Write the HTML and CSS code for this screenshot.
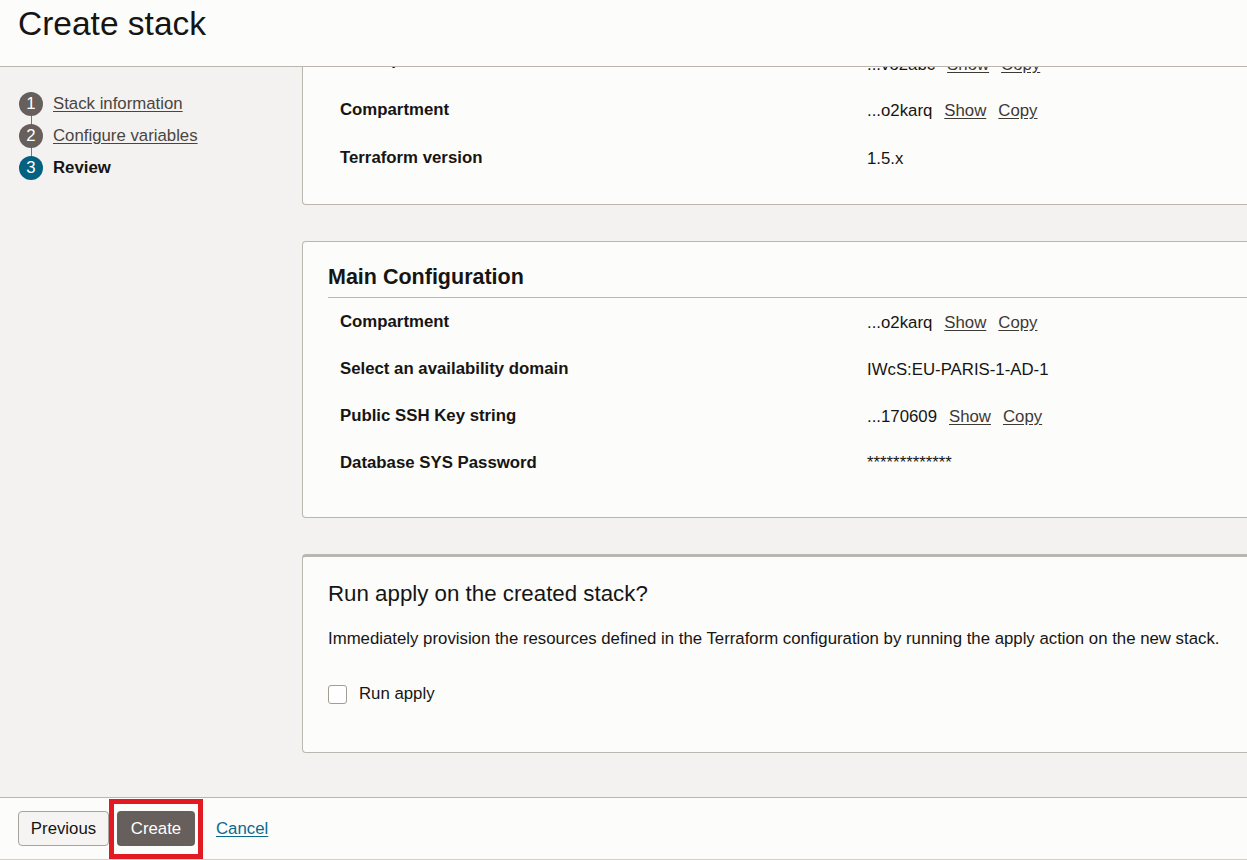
FILE: index.html
```html
<!DOCTYPE html>
<html lang="en">
<head>
<meta charset="utf-8">
<title>Create stack</title>
<link rel="stylesheet" href="styles.css">
</head>
<body>
<header class="page-header">
  <h1 class="title">Create stack</h1>
</header>
<div class="main">
  <nav class="sidebar">
    <ol class="steps">
      <li class="step done"><span class="num">1</span><a href="#" class="step-link">Stack information</a></li>
      <li class="step done"><span class="num">2</span><a href="#" class="step-link">Configure variables</a></li>
      <li class="step active"><span class="num">3</span><span class="step-current">Review</span></li>
    </ol>
  </nav>
  <section class="content">
    <div class="card card-first">
      <div class="rows rows-tall">
        <div class="row row-hidden"><div class="label">Description</div><div class="value">...vo2abc<a href="#" class="act">Show</a><a href="#" class="act">Copy</a></div></div>
        <div class="row"><div class="label">Compartment</div><div class="value">...o2karq<a href="#" class="act">Show</a><a href="#" class="act">Copy</a></div></div>
        <div class="row"><div class="label">Terraform version</div><div class="value">1.5.x</div></div>
      </div>
    </div>
    <div class="card card-config">
      <h2 class="card-title">Main Configuration</h2>
      <div class="rows">
        <div class="row"><div class="label">Compartment</div><div class="value">...o2karq<a href="#" class="act">Show</a><a href="#" class="act">Copy</a></div></div>
        <div class="row"><div class="label">Select an availability domain</div><div class="value">IWcS:EU-PARIS-1-AD-1</div></div>
        <div class="row"><div class="label">Public SSH Key string</div><div class="value">...170609<a href="#" class="act">Show</a><a href="#" class="act">Copy</a></div></div>
        <div class="row"><div class="label">Database SYS Password</div><div class="value pw">*************</div></div>
      </div>
    </div>
    <div class="card card-apply">
      <h2 class="apply-title">Run apply on the created stack?</h2>
      <p class="apply-text">Immediately provision the resources defined in the Terraform configuration by running the apply action on the new stack.</p>
      <label class="check"><span class="box"></span><span>Run apply</span></label>
    </div>
  </section>
</div>
<footer class="footer">
  <button class="btn btn-secondary">Previous</button>
  <span class="highlight-wrap"><button class="btn btn-primary">Create</button><span class="highlight"></span></span>
  <a href="#" class="cancel">Cancel</a>
</footer>
</body>
</html>
```
FILE: styles.css
```css
* { box-sizing: border-box; }
html, body { margin: 0; padding: 0; }
body {
  font-family: "Liberation Sans", Arial, sans-serif;
  color: #161513;
  background: #fcfcfb;
  width: 1247px;
  height: 860px;
  overflow: hidden;
}
.page-header {
  height: 67px;
  border-bottom: 1px solid #bcb6b1;
  background: #fcfcfb;
  padding: 4px 0 0 18px;
}
.title {
  margin: 0;
  font-size: 33.5px;
  line-height: 40px;
  font-weight: normal;
  color: #161513;
}
.main {
  display: flex;
  height: 730px;
  background: #f3f2f1;
  overflow: hidden;
}
.sidebar {
  width: 302px;
  flex: none;
  padding-top: 21px;
}
.steps {
  list-style: none;
  margin: 0;
  padding: 0 0 0 19px;
}
.step {
  position: relative;
  display: flex;
  align-items: center;
  height: 32px;
  font-size: 16.8px;
}
.step + .step::before {
  content: "";
  position: absolute;
  left: 12px;
  top: -8px;
  width: 1px;
  height: 16px;
  background: #7a736e;
}
.num {
  width: 24px;
  height: 24px;
  border-radius: 50%;
  background: #665f5b;
  color: #fff;
  font-size: 16.8px;
  display: flex;
  align-items: center;
  justify-content: center;
  margin-right: 10px;
  position: relative;
  z-index: 1;
}
.active .num { background: #04617f; }
.step-link { color: #4a4541; text-decoration: underline; text-underline-offset: 2px; }
.step-current { font-weight: bold; color: #161513; }
.content {
  flex: 1;
  min-width: 0;
  overflow: hidden;
}
.card {
  background: #fcfcfb;
  border: 1px solid #bcb6b1;
  border-right: none;
  border-radius: 4px 0 0 4px;
  margin-right: -10px;
}
.card-first {
  margin-top: -30px;
  padding-bottom: 22px;
}
.rows { padding-left: 37px; }
.row {
  display: grid;
  grid-template-columns: 527px 1fr;
  align-items: center;
  height: 47px;
  font-size: 16.8px;
  line-height: 24px;
}
.rows-tall .row { height: 48px; }
.rows-tall .row-hidden { align-items: start; padding-top: 10px; }
.label { font-weight: bold; }
.value { color: #161513; padding-top: 2px; }
.row-hidden .value { padding-top: 5px; }
.act {
  color: #3d3935;
  text-decoration: underline;
  text-underline-offset: 2px;
  margin-left: 12px;
}
.pw { padding-top: 0; }
.card-config {
  margin-top: 36px;
  padding-bottom: 31px;
}
.card-title {
  margin: 0 0 0 25px;
  padding: 21px 0 6px;
  font-size: 21.5px;
  line-height: 28px;
  font-weight: bold;
  border-bottom: 1px solid #bcb6b1;
}
.card-apply {
  margin-top: 36px;
  border-top: 3px solid #bcb6b1;
  padding: 23px 0 46px 25px;
}
.apply-title {
  margin: 0;
  font-size: 22.3px;
  line-height: 28px;
  font-weight: normal;
  color: #161513;
}
.apply-text {
  margin: 19px 0 0;
  font-size: 16.8px;
  line-height: 24px;
}
.check {
  display: flex;
  align-items: center;
  margin-top: 31px;
  height: 24px;
  font-size: 16.8px;
}
.box {
  width: 19px;
  height: 19px;
  border: 1px solid #a39d97;
  border-radius: 3px;
  background: #fff;
  margin-right: 12px;
}
.footer {
  height: 63px;
  border-top: 1px solid #bcb6b1;
  border-bottom: 1px solid #d4d0cc;
  background: #fcfcfb;
  display: flex;
  align-items: center;
  padding-left: 18px;
}
.btn {
  font-family: "Liberation Sans", Arial, sans-serif;
  font-size: 16.8px;
  height: 35px;
  border-radius: 4px;
  padding: 0 10px;
  cursor: pointer;
}
.btn-secondary {
  width: 91px;
  background: #f5f4f2;
  border: 1px solid #aaa39d;
  color: #161513;
}
.highlight-wrap {
  position: relative;
  margin-left: 8px;
  display: inline-flex;
}
.btn-primary {
  width: 78px;
  background: #665f5b;
  border: none;
  color: #fff;
}
.highlight {
  position: absolute;
  left: -8px;
  top: -12px;
  width: 94px;
  height: 60px;
  border: 5px solid #e21b23;
  pointer-events: none;
}
.cancel {
  margin-left: 21px;
  color: #0a6a8c;
  font-size: 16.8px;
  text-decoration: underline;
  text-underline-offset: 2px;
}
```
